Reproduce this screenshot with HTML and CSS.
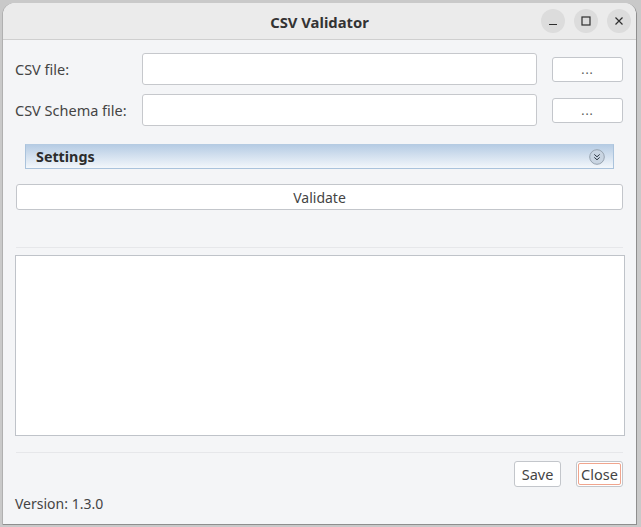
FILE: index.html
```html
<!DOCTYPE html>
<html>
<head>
<meta charset="utf-8">
<link rel="stylesheet" href="styles.css">
</head>
<body>
<div class="window">
  <div class="titlebar">
    <div class="title">CSV Validator</div>
    <div class="wbtns">
      <span class="wbtn"><svg width="12" height="12" viewBox="0 0 12 12"><path d="M2 9.5h8" stroke="#2e2e2e" stroke-width="1.2"/></svg></span>
      <span class="wbtn"><svg width="12" height="12" viewBox="0 0 12 12"><rect x="2" y="2" width="8" height="8" fill="none" stroke="#2e2e2e" stroke-width="1.2"/></svg></span>
      <span class="wbtn"><svg width="12" height="12" viewBox="0 0 12 12"><path d="M2.5 2.5l7 7M9.5 2.5l-7 7" stroke="#2e2e2e" stroke-width="1.2"/></svg></span>
    </div>
  </div>
  <div class="content">
    <div class="row">
      <label class="lbl">CSV file:</label>
      <div class="field"></div>
      <div class="btn browse">...</div>
    </div>
    <div class="row">
      <label class="lbl">CSV Schema file:</label>
      <div class="field"></div>
      <div class="btn browse">...</div>
    </div>
    <div class="settings">
      <span class="stitle">Settings</span>
      <span class="sicon"><svg width="16" height="16" viewBox="0 0 16 16"><circle cx="8" cy="8" r="7.3" fill="#c9d5e2" stroke="#97a3b0"/><path d="M5.3 5.4l2.7 2.4 2.7-2.4M5.3 8.4l2.7 2.4 2.7-2.4" fill="none" stroke="#2f3a46" stroke-width="1"/></svg></span>
    </div>
    <div class="btn validate">Validate</div>
    <div class="sep sep1"></div>
    <div class="output"></div>
    <div class="sep sep2"></div>
    <div class="actions">
      <div class="btn act">Save</div>
      <div class="btn act close"><span>Close</span></div>
    </div>
    <div class="version">Version: 1.3.0</div>
  </div>
</div>
</body>
</html>
```
FILE: styles.css
```css
html, body {
  margin: 0;
  padding: 0;
}
body {
  width: 641px;
  height: 527px;
  background: #c9c9c9;
  overflow: hidden;
  font-family: "Noto Sans", "Open Sans", sans-serif;
  color: #444;
}
.window {
  margin: 3px 0 0 3px;
  width: 633px;
  height: 521px;
  border-radius: 12px 12px 0 0;
  background: #f4f5f7;
  border-right: 1px solid #8e8e8e;
  border-bottom: 1px solid #8e8e8e;
  box-shadow: -1px 0 0 #b0b0b0;
  overflow: hidden;
}
.titlebar {
  height: 36px;
  background: #ebebeb;
  border-bottom: 1px solid #cfcfcf;
  position: relative;
  display: flex;
  align-items: center;
  justify-content: center;
}
.title {
  font-weight: bold;
  font-size: 14.8px;
  color: #333;
  margin-top: 1px;
}
.wbtns {
  position: absolute;
  right: 5px;
  top: 6px;
  display: flex;
  gap: 9px;
}
.wbtn {
  width: 24px;
  height: 24px;
  border-radius: 50%;
  background: #dcdcdc;
  display: flex;
  align-items: center;
  justify-content: center;
}
.content {
  padding: 13px 13px 0 12px;
  display: flex;
  flex-direction: column;
}
.row {
  display: flex;
  align-items: center;
  height: 32px;
  margin-bottom: 9px;
}
.lbl {
  width: 127px;
  font-size: 14.5px;
  color: #444;
}
.field {
  flex: 1;
  height: 30px;
  background: #fff;
  border: 1px solid #c6c8cc;
  border-radius: 3px;
  margin-right: 15px;
}
.btn {
  background: #fff;
  border: 1px solid #c3c6cb;
  border-radius: 3px;
  box-sizing: border-box;
  display: flex;
  align-items: center;
  justify-content: center;
  font-size: 14px;
  color: #444;
}
.browse {
  width: 71px;
  height: 25px;
  font-size: 12px;
  letter-spacing: 1px;
  color: #555;
}
.settings {
  margin: 9px 9px 0 10px;
  height: 25px;
  box-sizing: border-box;
  border: 1px solid #aac3dc;
  border-top-color: #b5cbe2;
  background: linear-gradient(#b6cce4, #f3f7fb);
  display: flex;
  align-items: center;
  justify-content: space-between;
  padding: 0 8px 0 10px;
}
.stitle {
  font-weight: bold;
  font-size: 14.3px;
  color: #2c2c2c;
}
.sicon {
  display: flex;
}
.validate {
  margin: 15px 0 0 1px;
  height: 26px;
  color: #444;
}
.sep {
  height: 1px;
  background: #e6e7ea;
  margin-left: 1px;
}
.sep1 {
  margin-top: 37px;
}
.output {
  margin-top: 7px;
  margin-right: -2px;
  height: 181px;
  background: #fff;
  border: 1px solid #bfc3c9;
  box-sizing: border-box;
}
.sep2 {
  margin-top: 16px;
}
.actions {
  display: flex;
  justify-content: flex-end;
  gap: 15px;
  margin-top: 8px;
}
.act {
  width: 47px;
  height: 26px;
  font-size: 14.5px;
}
.close {
  padding: 1px;
}
.close span {
  border: 1px solid #f0a58e;
  border-radius: 2px;
  width: 100%;
  height: 100%;
  box-sizing: border-box;
  display: flex;
  align-items: center;
  justify-content: center;
}
.version {
  margin-top: 7px;
  font-size: 14px;
  color: #444;
}
```
